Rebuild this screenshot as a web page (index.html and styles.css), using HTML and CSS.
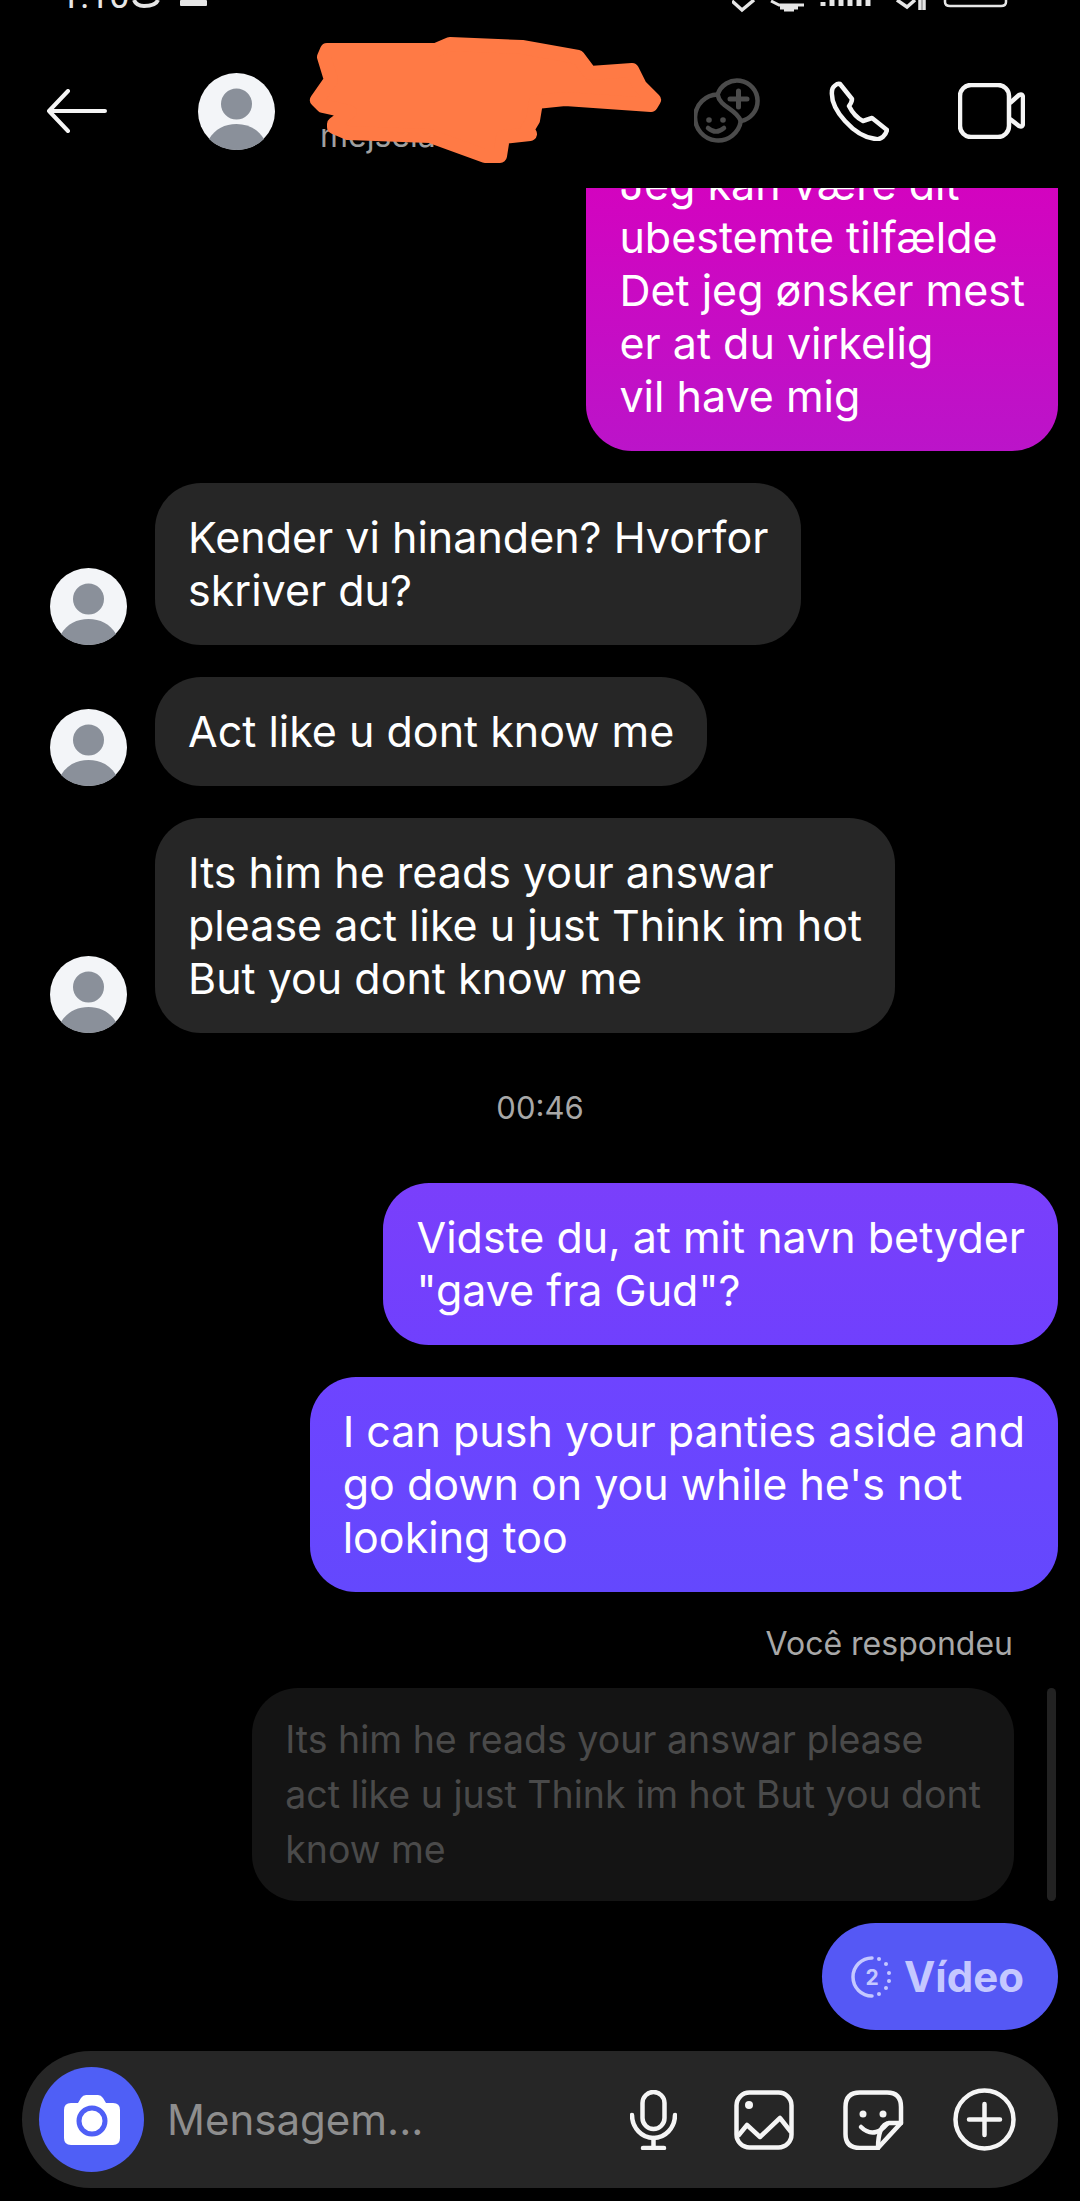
FILE: index.html
```html
<!DOCTYPE html>
<html>

<head>
    <title>Chat</title>
    <link rel="stylesheet" href="styles.css">
</head>

<body>
    <svg class="defs" width="0" height="0">
        <symbol id="avatar" viewBox="0 0 77 77">
            <circle cx="38.5" cy="38.5" r="38.5" fill="#f3f5f8" />
            <circle cx="38.5" cy="31" r="15.5" fill="#8a909a" />
            <path d="M11 66 C17 56 27 51 38.5 51 C50 51 60 56 66 66 C59 73 49 77 38.5 77 C28 77 18 73 11 66 Z" fill="#8a909a" />
        </symbol>
    </svg>

    <div class="page">
        <div class="status">
            <span class="status-time">1:10</span>
            <svg class="status-left" width="80" height="14" viewBox="0 0 80 14">
                <path d="M2 0 C4 5 8 6 12 6 C18 6 24 5 26 0" fill="none" stroke="#e6e6e6" stroke-width="4" />
                <rect x="48" y="0" width="27" height="6" rx="1" fill="#e6e6e6" />
            </svg>
            <svg class="status-right" width="284" height="14" viewBox="0 0 284 14">
                <path d="M0 1 L10 10 L22 0" fill="none" stroke="#e6e6e6" stroke-width="3.5" />
                <path d="M39 1 L47 5 H72 M48 8 H66 M52 10 H62" fill="none" stroke="#e6e6e6" stroke-width="3" />
                <path d="M91 2 V6 M100 0 V6 M109 0 V6 M118 0 V6 M127 0 V6 M136 0 V6" stroke="#e6e6e6" stroke-width="5" />
                <path d="M165 0 L175 7 L183 0 M188 10 V0 M192 10 V0" fill="none" stroke="#e6e6e6" stroke-width="3.5" />
                <path d="M213 0 V2 Q213 6 218 6 H269 Q274 6 274 2 V0" fill="none" stroke="#e6e6e6" stroke-width="2.5" />
            </svg>
        </div>

        <header class="header">
            <svg class="back-icon" width="61" height="44" viewBox="0 0 61 44">
                <path d="M22 2 L3 22 L22 42 M3 22 H59" fill="none" stroke="#f5f5f5" stroke-width="4" stroke-linecap="round" stroke-linejoin="round" />
            </svg>
            <svg class="avatar header-avatar"><use href="#avatar" /></svg>
            <div class="peer">
                <div class="peer-name">M</div>
                <div class="peer-user">mejsela</div>
            </div>
            <div class="header-actions">
                <svg width="66" height="66" viewBox="0 0 66 66">
                    <g fill="none" stroke="#4b4b4b" stroke-width="4.5" stroke-linecap="round">
                        <path d="M23.6 16.5 A23 23 0 1 0 46.8 43.1" />
                        <path d="M23.6 16.5 A20.5 20.5 0 1 1 46.8 43.1" />
                        <path d="M23.6 16.5 C26 30 42 30 46.8 43.1" />
                        <path d="M36 21 H53 M44.5 13 V29" stroke-width="5" />
                        <path d="M14 50 Q22 57 30 50" />
                    </g>
                    <circle cx="15" cy="42" r="2.8" fill="#4b4b4b" />
                    <circle cx="29" cy="42" r="2.8" fill="#4b4b4b" />
                </svg>
                <svg width="60" height="60" viewBox="0 0 60 60">
                    <path d="M3 10 C3 6 8 2 11 3 L23 18 Q23 21 20 25 C24 33 30 38 34 40 L43 37 L58 49 C57 54 52 59 47 58 C25 56 1 28 3 10 Z" fill="none" stroke="#f5f5f5" stroke-width="4.5" stroke-linejoin="round" />
                </svg>
                <svg width="67" height="56" viewBox="0 0 67 56">
                    <rect x="2" y="2" width="49" height="52" rx="11" fill="none" stroke="#f5f5f5" stroke-width="4.5" />
                    <path d="M52 20 L61 12 Q65 10 65 15 V40 Q65 45 61 43 L52 36" fill="none" stroke="#f5f5f5" stroke-width="4.5" stroke-linejoin="round" />
                </svg>
            </div>
            <svg class="scribble" width="680" height="188" viewBox="0 0 680 188">
                <path d="M327 50 L436 50 L450 44 L522 47 L578 57 L590 73 L632 70 L640 86 L654 100 L651 105 L565 99 L536 102 L533 120 L527 130 L530 134 L503 137 L500 156 L485 156 L430 136 L348 133 L334 127 L334 124 L350 112 L323 106 L317 100 L331 80 L324 57 Z" fill="#ff7a45" stroke="#ff7a45" stroke-width="14" stroke-linejoin="round" />
            </svg>
        </header>

        <main class="chat">
            <div class="msg msg-out msg-first">
                <div class="bubble bubble-magenta">Jeg kan være dit<br>ubestemte tilfælde<br>Det jeg ønsker mest<br>er at du virkelig<br>vil have mig</div>
            </div>

            <div class="msg msg-in">
                <svg class="avatar"><use href="#avatar" /></svg>
                <div class="bubble bubble-grey">Kender vi hinanden? Hvorfor<br>skriver du?</div>
            </div>
            <div class="msg msg-in">
                <svg class="avatar"><use href="#avatar" /></svg>
                <div class="bubble bubble-grey">Act like u dont know me</div>
            </div>
            <div class="msg msg-in">
                <svg class="avatar"><use href="#avatar" /></svg>
                <div class="bubble bubble-grey">Its him he reads your answar<br>please act like u just Think im hot<br>But you dont know me</div>
            </div>

            <div class="time">00:46</div>

            <div class="msg msg-out">
                <div class="bubble bubble-violet">Vidste du, at mit navn betyder<br>"gave fra Gud"?</div>
            </div>
            <div class="msg msg-out">
                <div class="bubble bubble-blue">I can push your panties aside and<br>go down on you while he's not<br>looking too</div>
            </div>

            <div class="reply">
                <div class="reply-label">Você respondeu</div>
                <div class="reply-row">
                    <div class="reply-bubble">Its him he reads your answar please<br>act like u just Think im hot But you dont<br>know me</div>
                    <div class="reply-bar"></div>
                </div>
            </div>

            <div class="msg msg-out msg-video">
                <div class="video-btn">
                    <svg width="44" height="42" viewBox="0 0 44 42">
                        <path d="M23 2 A19 19 0 0 0 23 40" fill="none" stroke="#c5c8ff" stroke-width="3.5" stroke-linecap="round" />
                        <g fill="#c5c8ff">
                            <circle cx="30" cy="3" r="2" />
                            <circle cx="37" cy="8" r="2" />
                            <circle cx="40" cy="17" r="2" />
                            <circle cx="40" cy="25" r="2" />
                            <circle cx="37" cy="32" r="2" />
                            <circle cx="30" cy="38" r="2" />
                        </g>
                        <text x="23" y="29" class="video-count">2</text>
                    </svg>
                    <span>Vídeo</span>
                </div>
            </div>
        </main>

        <footer class="composer">
            <div class="camera">
                <svg width="56" height="50" viewBox="0 0 56 50">
                    <path d="M7 8 H14 L17 3 Q19 0 22 0 H34 Q37 0 39 3 L42 8 H49 Q56 8 56 15 V43 Q56 50 49 50 H7 Q0 50 0 43 V15 Q0 8 7 8 Z" fill="#fff" />
                    <circle cx="28" cy="26" r="13" fill="none" stroke="#4f5ff6" stroke-width="5" />
                </svg>
            </div>
            <div class="placeholder">Mensagem...</div>
            <div class="composer-actions">
                <svg class="mic-icon" width="47" height="60" viewBox="0 0 47 60">
                    <g fill="none" stroke="#f5f5f5" stroke-width="4.5" stroke-linecap="round">
                        <rect x="12.5" y="2" width="22" height="37" rx="11" />
                        <path d="M2 25 C2 38 12 48 23.5 48 C35 48 45 38 45 25" />
                        <path d="M23.5 48 V58 M13 58 H34" />
                    </g>
                </svg>
                <svg width="60" height="60" viewBox="0 0 60 60">
                    <g fill="none" stroke="#f5f5f5" stroke-width="4.5" stroke-linejoin="round">
                        <rect x="2.5" y="2.5" width="55" height="55" rx="13" />
                        <path d="M4 46 L13 35 L26 47 L46 28 L57 42" />
                    </g>
                    <circle cx="15" cy="15" r="4" fill="#f5f5f5" />
                </svg>
                <svg width="61" height="60" viewBox="0 0 61 60">
                    <g fill="none" stroke="#f5f5f5" stroke-width="4.5" stroke-linecap="round" stroke-linejoin="round">
                        <path d="M35 58 H17 Q2.5 58 2.5 44 V17 Q2.5 2.5 17 2.5 H44 Q58 2.5 58 17 V33 Z" />
                        <path d="M58 33 H46 Q35 35 35 58" />
                        <path d="M18 37 Q25 44 33 42 Q38 41 44 34" />
                    </g>
                    <circle cx="20" cy="24" r="3.5" fill="#f5f5f5" />
                    <circle cx="40" cy="24" r="3.5" fill="#f5f5f5" />
                </svg>
                <svg width="63" height="63" viewBox="0 0 63 63">
                    <circle cx="31.5" cy="31.5" r="29" fill="none" stroke="#f5f5f5" stroke-width="4.5" />
                    <path d="M16 31.5 H47 M31.5 16 V47" stroke="#f5f5f5" stroke-width="4.5" stroke-linecap="round" />
                </svg>
            </div>
        </footer>
    </div>
</body>

</html>
```

FILE: styles.css
```css
body {
    margin: 0;
    background-color: #000;
    color: #f5f5f5;
    font-family: Inter, Roboto, sans-serif;
}

.defs {
    position: absolute;
}

.page {
    display: flex;
    flex-direction: column;
    height: 2201px;
    overflow: hidden;
}

/* status bar is cut off by the top of the screenshot */
.status {
    display: flex;
    align-items: flex-end;
    height: 14px;
    padding-left: 60px;
    overflow: hidden;
    flex-shrink: 0;
}

.status-time {
    font-family: Roboto, sans-serif;
    font-size: 36px;
    line-height: 36px;
    color: #e6e6e6;
    width: 72px;
    flex-shrink: 0;
}

.status-left {
    flex-shrink: 0;
}

.status-right {
    margin-left: auto;
    margin-right: 64px;
    flex-shrink: 0;
}

.header {
    position: relative;
    display: flex;
    align-items: center;
    height: 154px;
    padding: 20px 55px 0 46px;
    flex-shrink: 0;
}

.back-icon {
    margin-right: 91px;
    flex-shrink: 0;
}

.avatar {
    width: 77px;
    height: 77px;
    flex-shrink: 0;
}

.peer {
    margin-left: 45px;
    margin-top: 4px;
}

.peer-name {
    font-size: 38px;
    line-height: 46px;
}

.peer-user {
    font-size: 32px;
    line-height: 38px;
    color: #a0a0a0;
}

.header-actions {
    display: flex;
    align-items: center;
    gap: 69px;
    margin-left: auto;
}

.scribble {
    position: absolute;
    left: 0;
    top: -14px;
}

.chat {
    flex: 1;
    display: flex;
    flex-direction: column;
    gap: 32px;
    overflow: hidden;
}

.msg {
    display: flex;
    align-items: flex-end;
    flex-shrink: 0;
}

.msg-out {
    justify-content: flex-end;
    padding-right: 22px;
}

.msg-first {
    margin-top: -58px;
}

.msg-in {
    gap: 28px;
    padding-left: 50px;
}

.bubble {
    padding: 28px 33px;
    border-radius: 46px;
    font-size: 43px;
    line-height: 53px;
    color: #fff;
}

.bubble-grey {
    background-color: #262626;
}

.bubble-magenta {
    background: linear-gradient(180deg, #d800bd 0%, #bb14c9 100%);
}

.bubble-violet {
    background: linear-gradient(180deg, #7a3ffb 0%, #7040fd 100%);
}

.bubble-blue {
    background: linear-gradient(180deg, #6e44ff 0%, #6448fd 100%);
}

.time {
    margin: 23px 0;
    font-size: 31px;
    line-height: 40px;
    text-align: center;
    color: #a8a8a8;
}

.reply {
    display: flex;
    flex-direction: column;
    align-items: flex-end;
    gap: 24px;
    padding-right: 24px;
}

.reply-label {
    margin-right: 43px;
    font-size: 32px;
    line-height: 40px;
    color: #a8a8a8;
}

.reply-row {
    display: flex;
    align-items: stretch;
    gap: 33px;
}

.reply-bubble {
    padding: 24px 33px;
    border-radius: 46px;
    background-color: #141414;
    color: #4a4a4a;
    font-size: 37.5px;
    line-height: 55px;
}

.reply-bar {
    width: 9px;
    border-radius: 5px;
    background-color: #222;
}

.msg-video {
    margin-top: -10px;
}

.video-btn {
    display: flex;
    align-items: center;
    gap: 11px;
    height: 107px;
    padding: 0 34px 0 27px;
    border-radius: 54px;
    background-color: #5558f5;
    color: #c5c8ff;
    font-size: 42px;
    font-weight: 700;
}

.video-count {
    font-size: 21px;
    font-weight: 700;
    fill: #c5c8ff;
    text-anchor: middle;
}

.composer {
    display: flex;
    align-items: center;
    height: 137px;
    margin: 0 22px 13px;
    padding: 0 42px 0 17px;
    border-radius: 69px;
    background-color: #262626;
    flex-shrink: 0;
}

.camera {
    display: flex;
    align-items: center;
    justify-content: center;
    width: 105px;
    height: 105px;
    border-radius: 50%;
    background-color: #4f5ff6;
    flex-shrink: 0;
}

.placeholder {
    margin-left: 23px;
    font-size: 42px;
    color: #8e8e8e;
}

.composer-actions {
    display: flex;
    align-items: center;
    gap: 49px;
    margin-left: auto;
}

.mic-icon {
    margin-right: 8px;
}
```
